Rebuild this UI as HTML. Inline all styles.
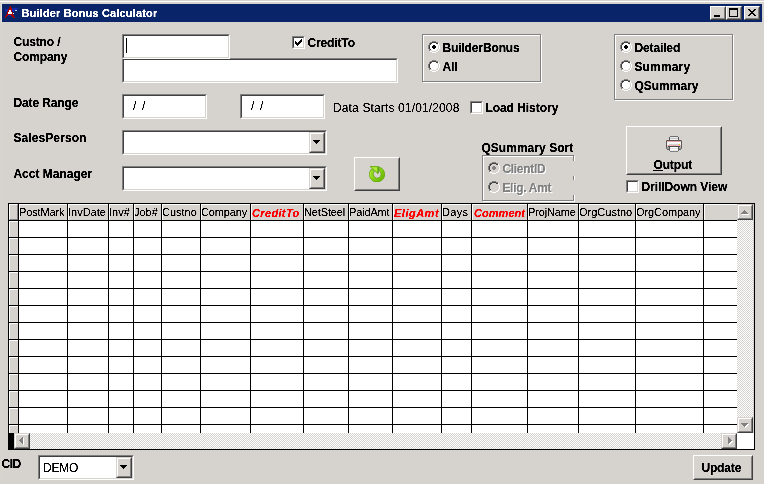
<!DOCTYPE html><html><head><meta charset="utf-8"><title>Builder Bonus Calculator</title><style>
html,body{margin:0;padding:0;}
body{width:764px;height:484px;background:#d6d3ce;overflow:hidden;position:relative;font-family:"Liberation Sans",sans-serif;font-size:12px;color:#000;}
.a{position:absolute;}
.b{position:absolute;font-weight:bold;font-size:12px;line-height:15px;white-space:nowrap;margin-left:-0.6px;margin-top:1px;letter-spacing:-0.12px;}
.r{position:absolute;font-size:12px;line-height:15px;white-space:nowrap;}
/* sunken field: outer 808080/fff, inner 404040/d4d0c8 */
.sunk{position:absolute;background:#fff;box-sizing:border-box;border:1px solid;border-color:#808080 #fff #fff #808080;}
.sunk:before{content:"";position:absolute;left:0;top:0;right:0;bottom:0;border:1px solid;border-color:#404040 #d6d3ce #d6d3ce #404040;}
/* raised button: outer fff / 404040 ; inner d4d0c8 / 808080 */
.btn{position:absolute;background:#d6d3ce;box-sizing:border-box;border:1px solid;border-color:#fff #404040 #404040 #fff;}
.btn:before{content:"";position:absolute;left:0;top:0;right:0;bottom:0;border:1px solid;border-color:#d6d3ce #808080 #808080 #d6d3ce;}
/* scrollbar style button: outer d4d0c8/404040, inner fff/808080 */
.sbtn{position:absolute;background:#d6d3ce;box-sizing:border-box;border:1px solid;border-color:#d6d3ce #404040 #404040 #d6d3ce;}
.sbtn:before{content:"";position:absolute;left:0;top:0;right:0;bottom:0;border:1px solid;border-color:#fff #808080 #808080 #fff;}
.grp{position:absolute;box-sizing:border-box;}
.grp:before{content:"";position:absolute;left:1px;top:1px;right:0;bottom:0;border:1px solid #fff;}
.grp:after{content:"";position:absolute;left:0;top:0;right:1px;bottom:1px;border:1px solid #808080;}
.chk{position:absolute;width:13px;height:13px;}
.dither{background-color:#d6d3ce;background-image:repeating-conic-gradient(#d6d3ce 0 25%,#fff 0 50%);background-size:2px 2px;}
.hd{position:absolute;top:204px;height:16px;background:#d6d3ce;box-sizing:border-box;border-left:1px solid #fff;border-top:1px solid #fff;font-size:11px;line-height:14px;white-space:nowrap;overflow:hidden;}
.hd span{position:absolute;left:-1px;top:0px;}
.hd.red span{color:#f00;font-weight:bold;font-style:italic;top:1px;left:0px;letter-spacing:0.35px;}
.r,.hd span{filter:url(#al);}
.b,#ttl,.hd.red span{filter:url(#alb);}
.dis{color:#808080;text-shadow:1px 1px 0 #fff;}
</style></head><body>
<svg width="0" height="0" style="position:absolute"><filter id="al" x="-10%" y="-10%" width="120%" height="130%" color-interpolation-filters="sRGB"><feComponentTransfer><feFuncA type="linear" slope="3.5" intercept="-1.0"/></feComponentTransfer></filter><filter id="alb" x="-10%" y="-10%" width="120%" height="130%" color-interpolation-filters="sRGB"><feComponentTransfer><feFuncA type="linear" slope="2.5" intercept="-0.4"/></feComponentTransfer></filter></svg>
<div class="a" style="left:0px;top:1px;width:764px;height:1px;background:#fff"></div>
<div class="a" style="left:1px;top:2px;width:1px;height:21px;background:#e4e1da"></div><div class="a" style="left:1px;top:23px;width:1px;height:461px;background:#d8d5cd"></div>
<div class="a" style="left:2px;top:4px;width:760px;height:18px;background:#0a246a"></div>
<svg class="a" style="left:4px;top:5px" width="16" height="16" viewBox="0 0 16 16" shape-rendering="crispEdges"><rect x="6" y="1" width="1" height="1" fill="#a80000"/><rect x="5" y="2" width="2" height="1" fill="#a80000"/><rect x="5" y="3" width="3" height="1" fill="#a80000"/><rect x="8" y="3" width="6" height="1" fill="#1428a8"/><rect x="1" y="4" width="3" height="1" fill="#1428a8"/><rect x="4" y="4" width="4" height="1" fill="#a80000"/><rect x="8" y="4" width="5" height="1" fill="#1428a8"/><rect x="1" y="5" width="3" height="1" fill="#1428a8"/><rect x="4" y="5" width="1" height="1" fill="#a80000"/><rect x="5" y="5" width="2" height="1" fill="#fff"/><rect x="7" y="5" width="1" height="1" fill="#a80000"/><rect x="8" y="5" width="3" height="1" fill="#1428a8"/><rect x="11" y="5" width="2" height="1" fill="#b8d8f0"/><rect x="2" y="6" width="1" height="1" fill="#1428a8"/><rect x="3" y="6" width="2" height="1" fill="#a80000"/><rect x="5" y="6" width="2" height="1" fill="#fff"/><rect x="7" y="6" width="1" height="1" fill="#a80000"/><rect x="8" y="6" width="2" height="1" fill="#1428a8"/><rect x="3" y="7" width="1" height="1" fill="#a80000"/><rect x="4" y="7" width="4" height="1" fill="#fff"/><rect x="8" y="7" width="1" height="1" fill="#a80000"/><rect x="3" y="8" width="1" height="1" fill="#a80000"/><rect x="4" y="8" width="4" height="1" fill="#fff"/><rect x="8" y="8" width="1" height="1" fill="#a80000"/><rect x="9" y="8" width="1" height="1" fill="#fff"/><rect x="2" y="9" width="7" height="1" fill="#a80000"/><rect x="2" y="10" width="2" height="1" fill="#a80000"/><rect x="4" y="10" width="3" height="1" fill="#1428a8"/><rect x="7" y="10" width="3" height="1" fill="#a80000"/><rect x="1" y="11" width="2" height="1" fill="#a80000"/><rect x="8" y="11" width="2" height="1" fill="#a80000"/><rect x="1" y="12" width="1" height="1" fill="#a80000"/><rect x="9" y="12" width="2" height="1" fill="#a80000"/></svg>
<div class="a" style="left:21.5px;top:6px;color:#fff;font-weight:bold;font-size:11px;line-height:14px;white-space:nowrap;letter-spacing:0.16px" id="ttl">Builder Bonus Calculator</div>
<div class="btn" style="left:710px;top:6px;width:16px;height:14px">
<div class="a" style="left:3px;top:8px;width:6px;height:2px;background:#000"></div>
</div>
<div class="btn" style="left:726px;top:6px;width:16px;height:14px">
<div class="a" style="left:2px;top:1px;width:9px;height:9px;box-sizing:border-box;border:1px solid #000;border-top-width:2px"></div>
</div>
<div class="btn" style="left:744px;top:6px;width:16px;height:14px">
<svg class="a" style="left:3px;top:2px" width="8" height="7" viewBox="0 0 8 7" shape-rendering="crispEdges"><path d="M0 0h2v1h-2zM6 0h2v1h-2zM1 1h2v1h-2zM5 1h2v1h-2zM2 2h4v1h-4zM3 3h2v1h-2zM2 4h4v1h-4zM1 5h2v1h-2zM5 5h2v1h-2zM0 6h2v1h-2zM6 6h2v1h-2z" fill="#000"/></svg>
</div>
<div class="b" style="left:14px;top:34px" id="l1">Custno /<br>Company</div>
<div class="b" style="left:14px;top:95px" id="l2">Date Range</div>
<div class="b" style="left:14px;top:130px;letter-spacing:0.1px" id="l3">SalesPerson</div>
<div class="b" style="left:14px;top:166px;letter-spacing:0" id="l4">Acct Manager</div>
<div class="b" style="left:2px;top:456px;letter-spacing:-0.4px" id="l5">CID</div>
<div class="sunk" style="left:122px;top:58px;width:276px;height:25px"></div>
<div class="sunk" style="left:122px;top:34px;width:108px;height:25px"><div class="a" style="left:3px;top:3px;width:1px;height:15px;background:#000"></div></div>
<div class="sunk" style="left:122px;top:94px;width:85px;height:25px"><div class="r" style="left:10px;top:4px;word-spacing:-0.5px" id="d1">/ &nbsp;/</div></div>
<div class="sunk" style="left:240px;top:94px;width:85px;height:25px"><div class="r" style="left:10px;top:4px;word-spacing:-0.5px">/ &nbsp;/</div></div>
<div class="r" style="left:333px;top:101px;letter-spacing:0.14px" id="ds">Data Starts 01/01/2008</div>
<div class="sunk chk" style="left:292px;top:36px"><svg class="a" style="left:2px;top:2px" width="7" height="7" viewBox="0 0 7 7" shape-rendering="crispEdges"><path d="M0 2h1v3h-1zM1 3h1v3h-1zM2 4h1v3h-1zM3 3h1v3h-1zM4 2h1v3h-1zM5 1h1v3h-1zM6 0h1v3h-1z" fill="#000"/></svg></div>
<div class="b" style="left:308px;top:35px" id="ct">CreditTo</div>
<div class="sunk chk" style="left:470px;top:101px"></div>
<div class="b" style="left:486px;top:100px;letter-spacing:-0.04px" id="lh">Load History</div>
<div class="sunk chk" style="left:626px;top:180px"></div>
<div class="b" style="left:642px;top:179px;letter-spacing:-0.05px" id="dd">DrillDown View</div>
<div class="grp" style="left:422px;top:34px;width:120px;height:49px"></div>
<svg class="a" style="left:428px;top:41px" width="12" height="12" viewBox="0 0 12 12" shape-rendering="crispEdges"><path d="M4 0h4v1h-4zM2 1h2v1h-2zM8 1h2v1h-2zM1 2h1v2h-1zM0 4h1v4h-1zM1 8h1v2h-1z" fill="#808080"/><path d="M4 1h4v1h-4zM2 2h2v1h-2zM8 2h2v1h-2zM2 3h1v1h-1zM1 4h1v4h-1zM2 8h1v1h-1z" fill="#404040"/><path d="M10 2h1v2h-1zM11 4h1v4h-1zM10 8h1v2h-1zM8 10h2v1h-2zM2 10h2v1h-2zM4 11h4v1h-4z" fill="#fff"/><path d="M9 3h1v1h-1zM10 4h1v4h-1zM9 8h1v1h-1zM8 9h2v1h-2zM2 9h2v1h-2zM4 10h4v1h-4z" fill="#d6d3ce"/><path d="M4 2h4v1h-4zM3 3h6v1h-6zM2 4h8v4h-8zM3 8h6v1h-6zM4 9h4v1h-4z" fill="#fff"/><path d="M5 4h2v1h-2zM4 5h4v2h-4zM5 7h2v1h-2z" fill="#000"/></svg>
<div class="b" style="left:443px;top:40px" id="bb">BuilderBonus</div>
<svg class="a" style="left:428px;top:60px" width="12" height="12" viewBox="0 0 12 12" shape-rendering="crispEdges"><path d="M4 0h4v1h-4zM2 1h2v1h-2zM8 1h2v1h-2zM1 2h1v2h-1zM0 4h1v4h-1zM1 8h1v2h-1z" fill="#808080"/><path d="M4 1h4v1h-4zM2 2h2v1h-2zM8 2h2v1h-2zM2 3h1v1h-1zM1 4h1v4h-1zM2 8h1v1h-1z" fill="#404040"/><path d="M10 2h1v2h-1zM11 4h1v4h-1zM10 8h1v2h-1zM8 10h2v1h-2zM2 10h2v1h-2zM4 11h4v1h-4z" fill="#fff"/><path d="M9 3h1v1h-1zM10 4h1v4h-1zM9 8h1v1h-1zM8 9h2v1h-2zM2 9h2v1h-2zM4 10h4v1h-4z" fill="#d6d3ce"/><path d="M4 2h4v1h-4zM3 3h6v1h-6zM2 4h8v4h-8zM3 8h6v1h-6zM4 9h4v1h-4z" fill="#fff"/></svg>
<div class="b" style="left:443px;top:59px">All</div>
<div class="grp" style="left:614px;top:34px;width:120px;height:67px"></div>
<svg class="a" style="left:620px;top:41px" width="12" height="12" viewBox="0 0 12 12" shape-rendering="crispEdges"><path d="M4 0h4v1h-4zM2 1h2v1h-2zM8 1h2v1h-2zM1 2h1v2h-1zM0 4h1v4h-1zM1 8h1v2h-1z" fill="#808080"/><path d="M4 1h4v1h-4zM2 2h2v1h-2zM8 2h2v1h-2zM2 3h1v1h-1zM1 4h1v4h-1zM2 8h1v1h-1z" fill="#404040"/><path d="M10 2h1v2h-1zM11 4h1v4h-1zM10 8h1v2h-1zM8 10h2v1h-2zM2 10h2v1h-2zM4 11h4v1h-4z" fill="#fff"/><path d="M9 3h1v1h-1zM10 4h1v4h-1zM9 8h1v1h-1zM8 9h2v1h-2zM2 9h2v1h-2zM4 10h4v1h-4z" fill="#d6d3ce"/><path d="M4 2h4v1h-4zM3 3h6v1h-6zM2 4h8v4h-8zM3 8h6v1h-6zM4 9h4v1h-4z" fill="#fff"/><path d="M5 4h2v1h-2zM4 5h4v2h-4zM5 7h2v1h-2z" fill="#000"/></svg>
<div class="b" style="left:635px;top:40px">Detailed</div>
<svg class="a" style="left:620px;top:60px" width="12" height="12" viewBox="0 0 12 12" shape-rendering="crispEdges"><path d="M4 0h4v1h-4zM2 1h2v1h-2zM8 1h2v1h-2zM1 2h1v2h-1zM0 4h1v4h-1zM1 8h1v2h-1z" fill="#808080"/><path d="M4 1h4v1h-4zM2 2h2v1h-2zM8 2h2v1h-2zM2 3h1v1h-1zM1 4h1v4h-1zM2 8h1v1h-1z" fill="#404040"/><path d="M10 2h1v2h-1zM11 4h1v4h-1zM10 8h1v2h-1zM8 10h2v1h-2zM2 10h2v1h-2zM4 11h4v1h-4z" fill="#fff"/><path d="M9 3h1v1h-1zM10 4h1v4h-1zM9 8h1v1h-1zM8 9h2v1h-2zM2 9h2v1h-2zM4 10h4v1h-4z" fill="#d6d3ce"/><path d="M4 2h4v1h-4zM3 3h6v1h-6zM2 4h8v4h-8zM3 8h6v1h-6zM4 9h4v1h-4z" fill="#fff"/></svg>
<div class="b" style="left:635px;top:59px;letter-spacing:0.17px">Summary</div>
<svg class="a" style="left:620px;top:79px" width="12" height="12" viewBox="0 0 12 12" shape-rendering="crispEdges"><path d="M4 0h4v1h-4zM2 1h2v1h-2zM8 1h2v1h-2zM1 2h1v2h-1zM0 4h1v4h-1zM1 8h1v2h-1z" fill="#808080"/><path d="M4 1h4v1h-4zM2 2h2v1h-2zM8 2h2v1h-2zM2 3h1v1h-1zM1 4h1v4h-1zM2 8h1v1h-1z" fill="#404040"/><path d="M10 2h1v2h-1zM11 4h1v4h-1zM10 8h1v2h-1zM8 10h2v1h-2zM2 10h2v1h-2zM4 11h4v1h-4z" fill="#fff"/><path d="M9 3h1v1h-1zM10 4h1v4h-1zM9 8h1v1h-1zM8 9h2v1h-2zM2 9h2v1h-2zM4 10h4v1h-4z" fill="#d6d3ce"/><path d="M4 2h4v1h-4zM3 3h6v1h-6zM2 4h8v4h-8zM3 8h6v1h-6zM4 9h4v1h-4z" fill="#fff"/></svg>
<div class="b" style="left:635px;top:78px;letter-spacing:0">QSummary</div>
<div class="b" style="left:482px;top:140px;letter-spacing:0.04px" id="qs">QSummary Sort</div>
<div class="grp" style="left:482px;top:155px;width:93px;height:47px"></div>
<div class="a" style="left:572px;top:161px;width:4px;height:15px;background:#d6d3ce"></div><div class="a" style="left:572px;top:180px;width:4px;height:15px;background:#d6d3ce"></div>
<svg class="a" style="left:488px;top:162px" width="12" height="12" viewBox="0 0 12 12" shape-rendering="crispEdges"><path d="M4 0h4v1h-4zM2 1h2v1h-2zM8 1h2v1h-2zM1 2h1v2h-1zM0 4h1v4h-1zM1 8h1v2h-1z" fill="#808080"/><path d="M4 1h4v1h-4zM2 2h2v1h-2zM8 2h2v1h-2zM2 3h1v1h-1zM1 4h1v4h-1zM2 8h1v1h-1z" fill="#404040"/><path d="M10 2h1v2h-1zM11 4h1v4h-1zM10 8h1v2h-1zM8 10h2v1h-2zM2 10h2v1h-2zM4 11h4v1h-4z" fill="#fff"/><path d="M9 3h1v1h-1zM10 4h1v4h-1zM9 8h1v1h-1zM8 9h2v1h-2zM2 9h2v1h-2zM4 10h4v1h-4z" fill="#d6d3ce"/><path d="M4 2h4v1h-4zM3 3h6v1h-6zM2 4h8v4h-8zM3 8h6v1h-6zM4 9h4v1h-4z" fill="#d6d3ce"/><path d="M5 4h2v1h-2zM4 5h4v2h-4zM5 7h2v1h-2z" fill="#808080"/></svg>
<div class="b dis" style="left:503px;top:161px;letter-spacing:-0.3px">ClientID</div>
<svg class="a" style="left:488px;top:181px" width="12" height="12" viewBox="0 0 12 12" shape-rendering="crispEdges"><path d="M4 0h4v1h-4zM2 1h2v1h-2zM8 1h2v1h-2zM1 2h1v2h-1zM0 4h1v4h-1zM1 8h1v2h-1z" fill="#808080"/><path d="M4 1h4v1h-4zM2 2h2v1h-2zM8 2h2v1h-2zM2 3h1v1h-1zM1 4h1v4h-1zM2 8h1v1h-1z" fill="#404040"/><path d="M10 2h1v2h-1zM11 4h1v4h-1zM10 8h1v2h-1zM8 10h2v1h-2zM2 10h2v1h-2zM4 11h4v1h-4z" fill="#fff"/><path d="M9 3h1v1h-1zM10 4h1v4h-1zM9 8h1v1h-1zM8 9h2v1h-2zM2 9h2v1h-2zM4 10h4v1h-4z" fill="#d6d3ce"/><path d="M4 2h4v1h-4zM3 3h6v1h-6zM2 4h8v4h-8zM3 8h6v1h-6zM4 9h4v1h-4z" fill="#d6d3ce"/></svg>
<div class="b dis" style="left:503px;top:180px;letter-spacing:-0.3px">Elig. Amt</div>
<div class="sunk" style="left:122px;top:130px;width:205px;height:25px"><div class="sbtn" style="right:1px;top:1px;width:16px;height:21px"><svg class="a" style="left:3px;top:7px" width="7" height="4" viewBox="0 0 7 4" shape-rendering="crispEdges"><path d="M0 0h7v1h-7zM1 1h5v1h-5zM2 2h3v1h-3zM3 3h1v1h-1z" fill="#000"/></svg></div></div>
<div class="sunk" style="left:122px;top:166px;width:205px;height:25px"><div class="sbtn" style="right:1px;top:1px;width:16px;height:21px"><svg class="a" style="left:3px;top:7px" width="7" height="4" viewBox="0 0 7 4" shape-rendering="crispEdges"><path d="M0 0h7v1h-7zM1 1h5v1h-5zM2 2h3v1h-3zM3 3h1v1h-1z" fill="#000"/></svg></div></div>
<div class="sunk" style="left:38px;top:455px;width:96px;height:25px"><div class="r" style="left:4px;top:5px;letter-spacing:-0.2px">DEMO</div><div class="sbtn" style="right:1px;top:1px;width:16px;height:21px"><svg class="a" style="left:3px;top:7px" width="7" height="4" viewBox="0 0 7 4" shape-rendering="crispEdges"><path d="M0 0h7v1h-7zM1 1h5v1h-5zM2 2h3v1h-3zM3 3h1v1h-1z" fill="#000"/></svg></div></div>
<div class="btn" style="left:354px;top:157px;width:46px;height:34px">
<svg class="a" style="left:14px;top:8px" width="16" height="16" viewBox="0 0 16 16">
<defs><linearGradient id="gg" x1="0" y1="0" x2="1" y2="1"><stop offset="0" stop-color="#a8e430"/><stop offset="0.5" stop-color="#86d014"/><stop offset="1" stop-color="#5eae00"/></linearGradient></defs>
<path d="M10.2 1.0 A7.7 7.7 0 1 1 2.6 2.9 L5.3 5.6 A3.9 3.9 0 1 0 10.2 4.9 Z" fill="url(#gg)" stroke="#58a200" stroke-width="0.7"/>
<path d="M1.0 0.5 L9.0 0.5 L8.9 7.6 Z" fill="#98dc24" stroke="#58a200" stroke-width="0.7"/>
<path d="M3.6 1.5 L7.9 1.5 L7.9 5.6 Z" fill="#b4ee3c"/>
<path d="M9.3 0.4 L9.2 7.4" stroke="#4c9600" stroke-width="0.9" fill="none"/>
<path d="M1.6 6.2 A6.6 6.6 0 0 0 2.2 11.6" stroke="#b4ee3c" stroke-width="1" fill="none" opacity="0.8"/>
</svg>
</div>
<div class="btn" style="left:626px;top:126px;width:96px;height:49px">
<svg class="a" style="left:39px;top:9px" width="16" height="16" viewBox="0 0 16 16" shape-rendering="crispEdges"><rect x="4" y="0" width="8" height="1" fill="#707070"/><rect x="3" y="1" width="1" height="1" fill="#585858"/><rect x="4" y="1" width="8" height="1" fill="#ececec"/><rect x="12" y="1" width="1" height="1" fill="#585858"/><rect x="3" y="2" width="1" height="1" fill="#585858"/><rect x="4" y="2" width="8" height="1" fill="#c4c4c4"/><rect x="12" y="2" width="1" height="1" fill="#585858"/><rect x="3" y="3" width="1" height="1" fill="#585858"/><rect x="4" y="3" width="8" height="1" fill="#f4f4f4"/><rect x="12" y="3" width="1" height="1" fill="#585858"/><rect x="0" y="4" width="1" height="1" fill="#908888"/><rect x="1" y="4" width="14" height="1" fill="#5c5050"/><rect x="15" y="4" width="1" height="1" fill="#908888"/><rect x="0" y="5" width="1" height="1" fill="#585858"/><rect x="1" y="5" width="14" height="1" fill="#e4a8a8"/><rect x="15" y="5" width="1" height="1" fill="#585858"/><rect x="0" y="6" width="1" height="1" fill="#585858"/><rect x="1" y="6" width="14" height="1" fill="#fafafa"/><rect x="15" y="6" width="1" height="1" fill="#585858"/><rect x="0" y="7" width="1" height="1" fill="#585858"/><rect x="1" y="7" width="14" height="1" fill="#f2f2f2"/><rect x="15" y="7" width="1" height="1" fill="#585858"/><rect x="0" y="8" width="1" height="1" fill="#585858"/><rect x="1" y="8" width="2" height="1" fill="#f8f8f8"/><rect x="3" y="8" width="10" height="1" fill="#cfcfcf"/><rect x="13" y="8" width="1" height="1" fill="#f0c800"/><rect x="14" y="8" width="1" height="1" fill="#f8f8f8"/><rect x="15" y="8" width="1" height="1" fill="#585858"/><rect x="0" y="9" width="1" height="1" fill="#585858"/><rect x="1" y="9" width="14" height="1" fill="#f2b0b0"/><rect x="15" y="9" width="1" height="1" fill="#585858"/><rect x="0" y="10" width="1" height="1" fill="#585858"/><rect x="1" y="10" width="1" height="1" fill="#c0c0c0"/><rect x="2" y="10" width="12" height="1" fill="#484848"/><rect x="14" y="10" width="1" height="1" fill="#c0c0c0"/><rect x="15" y="10" width="1" height="1" fill="#585858"/><rect x="0" y="11" width="1" height="1" fill="#585858"/><rect x="1" y="11" width="2" height="1" fill="#a8a8a8"/><rect x="3" y="11" width="1" height="1" fill="#585858"/><rect x="4" y="11" width="8" height="1" fill="#ffffff"/><rect x="12" y="11" width="1" height="1" fill="#585858"/><rect x="13" y="11" width="2" height="1" fill="#a8a8a8"/><rect x="15" y="11" width="1" height="1" fill="#585858"/><rect x="0" y="12" width="1" height="1" fill="#808080"/><rect x="1" y="12" width="2" height="1" fill="#989898"/><rect x="3" y="12" width="1" height="1" fill="#585858"/><rect x="4" y="12" width="8" height="1" fill="#e0e0e0"/><rect x="12" y="12" width="1" height="1" fill="#585858"/><rect x="13" y="12" width="2" height="1" fill="#989898"/><rect x="15" y="12" width="1" height="1" fill="#808080"/><rect x="1" y="13" width="2" height="1" fill="#606060"/><rect x="3" y="13" width="1" height="1" fill="#585858"/><rect x="4" y="13" width="8" height="1" fill="#ffffff"/><rect x="12" y="13" width="1" height="1" fill="#585858"/><rect x="13" y="13" width="2" height="1" fill="#606060"/><rect x="3" y="14" width="1" height="1" fill="#707070"/><rect x="4" y="14" width="8" height="1" fill="#e8e8e8"/><rect x="12" y="14" width="1" height="1" fill="#707070"/><rect x="4" y="15" width="8" height="1" fill="#808080"/></svg>
<div class="b" style="left:27px;top:30px" id="out"><span style="text-decoration:underline;text-underline-offset:1px;text-decoration-thickness:1px">O</span>utput</div>
</div>
<div class="btn" style="left:693px;top:455px;width:60px;height:25px"><div class="b" style="left:8px;top:4px;letter-spacing:-0.15px" id="upd">Update</div></div>
<div class="a" style="left:8px;top:203px;width:747px;height:247px;background:#000"></div>
<div class="a" style="left:9px;top:204px;width:745px;height:245px;background:#fff;overflow:hidden" id="gridin">
</div>
<div class="a" style="left:9px;top:204px;width:9px;height:229px;background:#d6d3ce"></div>
<div class="hd" style="left:9px;width:9px;border-right:1px solid #808080;border-bottom:1px solid #808080"></div>
<div class="hd" style="left:19px;width:48px"><span style="letter-spacing:-0.14px">PostMark</span></div>
<div class="hd" style="left:68px;width:40px"><span>InvDate</span></div>
<div class="hd" style="left:109px;width:24px"><span>Inv#</span></div>
<div class="hd" style="left:134px;width:27px"><span>Job#</span></div>
<div class="hd" style="left:162px;width:38px"><span>Custno</span></div>
<div class="hd" style="left:201px;width:49px"><span style="letter-spacing:-0.15px">Company</span></div>
<div class="hd red" style="left:251px;width:52px"><span>CreditTo</span></div>
<div class="hd" style="left:304px;width:44px"><span style="letter-spacing:-0.14px">NetSteel</span></div>
<div class="hd" style="left:349px;width:43px"><span style="letter-spacing:-0.15px">PaidAmt</span></div>
<div class="hd red" style="left:393px;width:48px"><span style="letter-spacing:0.5px">EligAmt</span></div>
<div class="hd" style="left:442px;width:29px"><span style="letter-spacing:0.3px">Days</span></div>
<div class="hd red" style="left:472px;width:55px"><span style="letter-spacing:0.05px;left:1px">Comment</span></div>
<div class="hd" style="left:528px;width:50px"><span style="letter-spacing:-0.14px">ProjName</span></div>
<div class="hd" style="left:579px;width:56px"><span>OrgCustno</span></div>
<div class="hd" style="left:636px;width:67px"><span style="letter-spacing:-0.1px">OrgCompany</span></div>
<div class="hd" style="left:704px;width:33px"><span></span></div>
<div class="a" style="left:18px;top:204px;width:1px;height:229px;background:#000"></div>
<div class="a" style="left:67px;top:204px;width:1px;height:229px;background:#000"></div>
<div class="a" style="left:108px;top:204px;width:1px;height:229px;background:#000"></div>
<div class="a" style="left:133px;top:204px;width:1px;height:229px;background:#000"></div>
<div class="a" style="left:161px;top:204px;width:1px;height:229px;background:#000"></div>
<div class="a" style="left:200px;top:204px;width:1px;height:229px;background:#000"></div>
<div class="a" style="left:250px;top:204px;width:1px;height:229px;background:#000"></div>
<div class="a" style="left:303px;top:204px;width:1px;height:229px;background:#000"></div>
<div class="a" style="left:348px;top:204px;width:1px;height:229px;background:#000"></div>
<div class="a" style="left:392px;top:204px;width:1px;height:229px;background:#000"></div>
<div class="a" style="left:441px;top:204px;width:1px;height:229px;background:#000"></div>
<div class="a" style="left:471px;top:204px;width:1px;height:229px;background:#000"></div>
<div class="a" style="left:527px;top:204px;width:1px;height:229px;background:#000"></div>
<div class="a" style="left:578px;top:204px;width:1px;height:229px;background:#000"></div>
<div class="a" style="left:635px;top:204px;width:1px;height:229px;background:#000"></div>
<div class="a" style="left:703px;top:204px;width:1px;height:229px;background:#000"></div>
<div class="a" style="left:9px;top:221px;width:1px;height:212px;background:#fff"></div>
<div class="a" style="left:9px;top:220px;width:728px;height:1px;background:#000"></div>
<div class="a" style="left:9px;top:221px;width:9px;height:1px;background:#fff"></div>
<div class="a" style="left:9px;top:237px;width:728px;height:1px;background:#000"></div>
<div class="a" style="left:9px;top:238px;width:9px;height:1px;background:#fff"></div>
<div class="a" style="left:9px;top:254px;width:728px;height:1px;background:#000"></div>
<div class="a" style="left:9px;top:255px;width:9px;height:1px;background:#fff"></div>
<div class="a" style="left:9px;top:271px;width:728px;height:1px;background:#000"></div>
<div class="a" style="left:9px;top:272px;width:9px;height:1px;background:#fff"></div>
<div class="a" style="left:9px;top:288px;width:728px;height:1px;background:#000"></div>
<div class="a" style="left:9px;top:289px;width:9px;height:1px;background:#fff"></div>
<div class="a" style="left:9px;top:305px;width:728px;height:1px;background:#000"></div>
<div class="a" style="left:9px;top:306px;width:9px;height:1px;background:#fff"></div>
<div class="a" style="left:9px;top:322px;width:728px;height:1px;background:#000"></div>
<div class="a" style="left:9px;top:323px;width:9px;height:1px;background:#fff"></div>
<div class="a" style="left:9px;top:339px;width:728px;height:1px;background:#000"></div>
<div class="a" style="left:9px;top:340px;width:9px;height:1px;background:#fff"></div>
<div class="a" style="left:9px;top:356px;width:728px;height:1px;background:#000"></div>
<div class="a" style="left:9px;top:357px;width:9px;height:1px;background:#fff"></div>
<div class="a" style="left:9px;top:373px;width:728px;height:1px;background:#000"></div>
<div class="a" style="left:9px;top:374px;width:9px;height:1px;background:#fff"></div>
<div class="a" style="left:9px;top:390px;width:728px;height:1px;background:#000"></div>
<div class="a" style="left:9px;top:391px;width:9px;height:1px;background:#fff"></div>
<div class="a" style="left:9px;top:407px;width:728px;height:1px;background:#000"></div>
<div class="a" style="left:9px;top:408px;width:9px;height:1px;background:#fff"></div>
<div class="a" style="left:9px;top:424px;width:728px;height:1px;background:#000"></div>
<div class="a" style="left:9px;top:425px;width:9px;height:1px;background:#fff"></div>
<div class="a dither" style="left:737px;top:204px;width:17px;height:229px"></div>
<div class="a" style="left:753px;top:204px;width:1px;height:245px;background:#d6d3ce"></div>
<div class="sbtn" style="left:737px;top:204px;width:16px;height:16px"><svg width="8" height="5" viewBox="0 0 8 5" shape-rendering="crispEdges" style="position:absolute;left:3px;top:5px"><path d="M3 0h1v1h-1zM2 1h3v1h-3zM1 2h5v1h-5zM0 3h7v1h-7z" fill="#fff" transform="translate(1,1)"/><path d="M3 0h1v1h-1zM2 1h3v1h-3zM1 2h5v1h-5zM0 3h7v1h-7z" fill="#808080"/></svg></div>
<div class="sbtn" style="left:737px;top:417px;width:16px;height:16px"><svg width="8" height="5" viewBox="0 0 8 5" shape-rendering="crispEdges" style="position:absolute;left:3px;top:5px"><path d="M0 0h7v1h-7zM1 1h5v1h-5zM2 2h3v1h-3zM3 3h1v1h-1z" fill="#fff" transform="translate(1,1)"/><path d="M0 0h7v1h-7zM1 1h5v1h-5zM2 2h3v1h-3zM3 3h1v1h-1z" fill="#808080"/></svg></div>
<div class="a dither" style="left:9px;top:433px;width:728px;height:16px"></div>
<div class="a" style="left:8px;top:433px;width:6px;height:16px;background:#000"></div>
<div class="sbtn" style="left:14px;top:433px;width:16px;height:16px"><svg width="5" height="8" viewBox="0 0 5 8" shape-rendering="crispEdges" style="position:absolute;left:4px;top:3px"><path d="M3 0h1v1h-1zM2 1h2v1h-2zM1 2h3v1h-3zM0 3h4v1h-4zM1 4h3v1h-3zM2 5h2v1h-2zM3 6h1v1h-1z" fill="#fff" transform="translate(1,1)"/><path d="M3 0h1v1h-1zM2 1h2v1h-2zM1 2h3v1h-3zM0 3h4v1h-4zM1 4h3v1h-3zM2 5h2v1h-2zM3 6h1v1h-1z" fill="#808080"/></svg></div>
<div class="sbtn" style="left:721px;top:433px;width:16px;height:16px"><svg width="5" height="8" viewBox="0 0 5 8" shape-rendering="crispEdges" style="position:absolute;left:6px;top:3px"><path d="M0 0h1v1h-1zM0 1h2v1h-2zM0 2h3v1h-3zM0 3h4v1h-4zM0 4h3v1h-3zM0 5h2v1h-2zM0 6h1v1h-1z" fill="#fff" transform="translate(1,1)"/><path d="M0 0h1v1h-1zM0 1h2v1h-2zM0 2h3v1h-3zM0 3h4v1h-4zM0 4h3v1h-3zM0 5h2v1h-2zM0 6h1v1h-1z" fill="#808080"/></svg></div>
<div class="a" style="left:737px;top:433px;width:17px;height:16px;background:#fff"></div>
</body></html>
